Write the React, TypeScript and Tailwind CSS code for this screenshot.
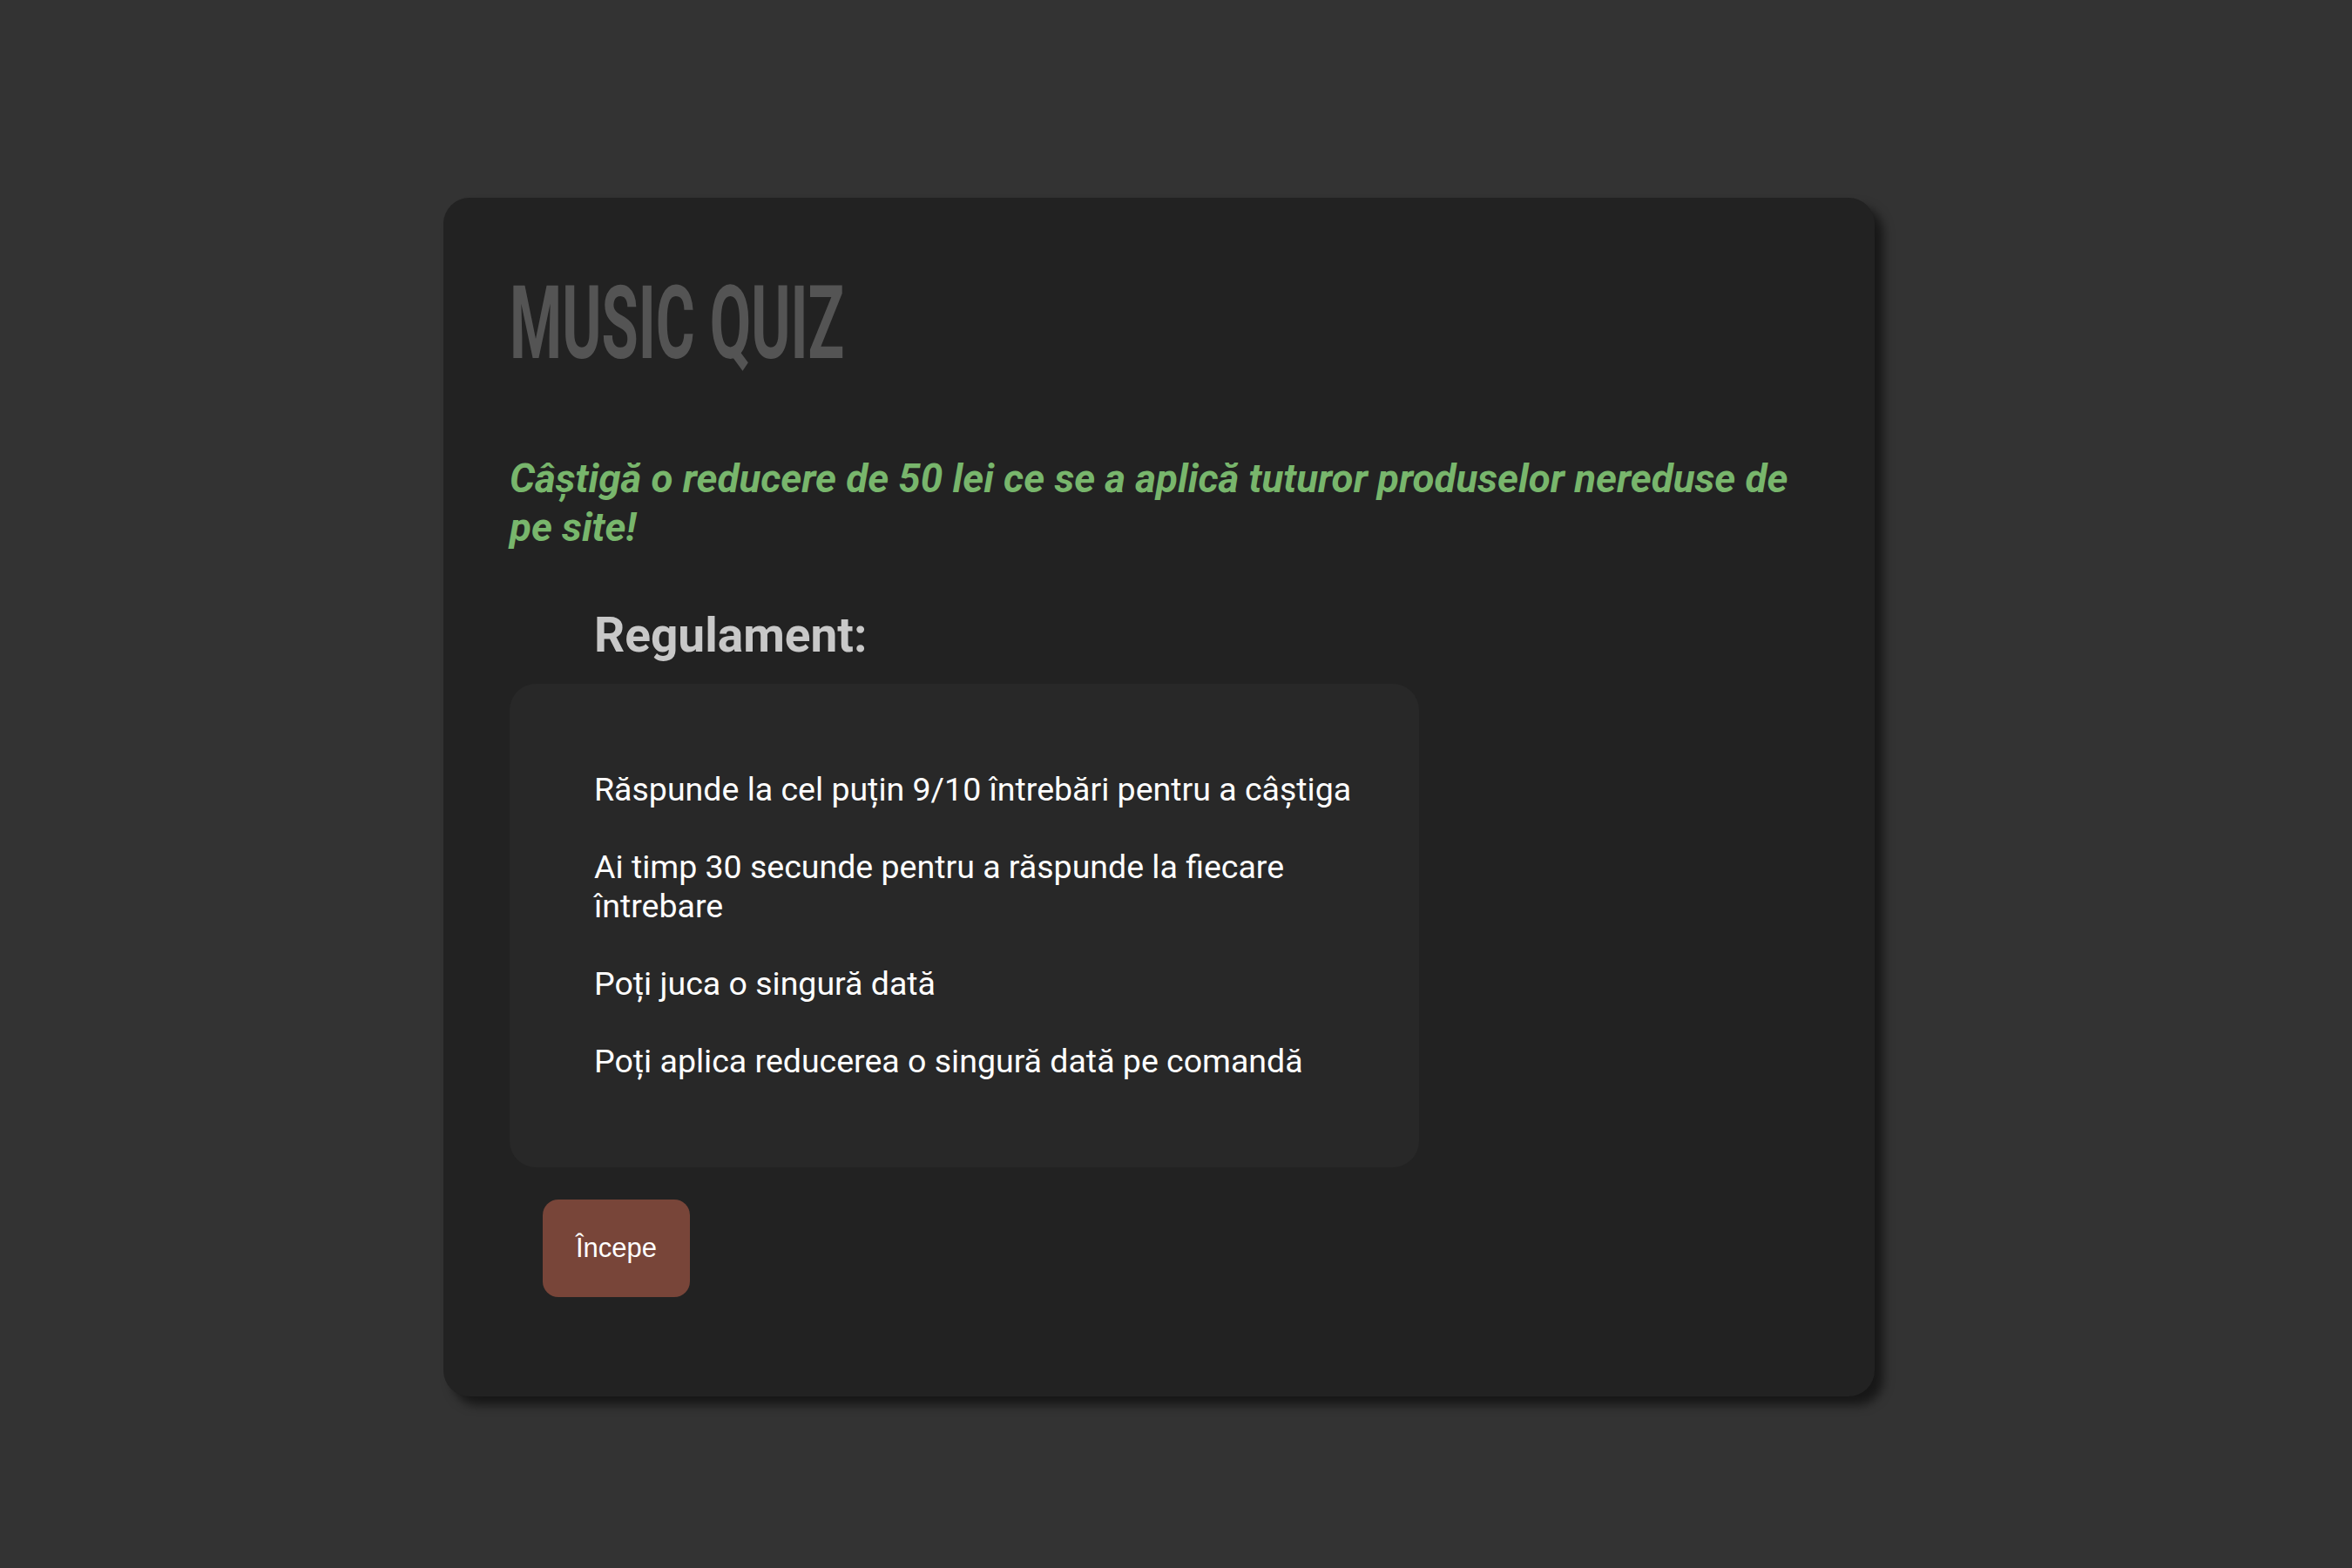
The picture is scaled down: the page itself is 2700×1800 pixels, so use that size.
const rules = [
  "Răspunde la cel puțin 9/10 întrebări pentru a câștiga",
  "Ai timp 30 secunde pentru a răspunde la fiecare întrebare",
  "Poți juca o singură dată",
  "Poți aplica reducerea o singură dată pe comandă",
];

export default function App() {
  return (
    <div
      className="min-h-screen w-full bg-[#333333] pt-[227px] pl-[509px] pb-[197px]"
      style={{ fontFamily: "Roboto, 'Noto Sans', sans-serif" }}
    >
      <div className="w-[1643px] h-[1376px] rounded-[30px] bg-[#222222] px-[76px] pt-[86px] shadow-[10px_10px_12px_rgba(0,0,0,0.55)]">
        <h1 className="origin-left scale-x-[0.587] text-[117px] leading-none font-bold text-[#545454] whitespace-nowrap">
          MUSIC QUIZ
        </h1>

        <p className="mt-[92px] text-[45.7px] leading-[56px] font-bold italic text-[#78b66c]">
          Câștigă o reducere de 50 lei ce se a aplică tuturor produselor nereduse de pe site!
        </p>

        <h2 className="mt-[68px] ml-[97px] text-[55px] leading-none font-bold text-[#c8c8c8]">
          Regulament:
        </h2>

        <div className="mt-[28px] w-[1044px] rounded-[30px] bg-[#282828] pt-[99px] pb-[99px] pl-[97px] pr-[60px]">
          <ul className="flex flex-col gap-[44px]">
            {rules.map((r) => (
              <li key={r} className="text-[37.5px] leading-[45px] text-white">
                {r}
              </li>
            ))}
          </ul>
        </div>

        <button
          className="mt-[37px] ml-[38px] flex h-[112px] w-[169px] items-center justify-center rounded-[18px] bg-[#784539] text-[31px] text-white"
          style={{ fontFamily: "'Liberation Sans', Arial, sans-serif" }}
        >
          Începe
        </button>
      </div>
    </div>
  );
}
